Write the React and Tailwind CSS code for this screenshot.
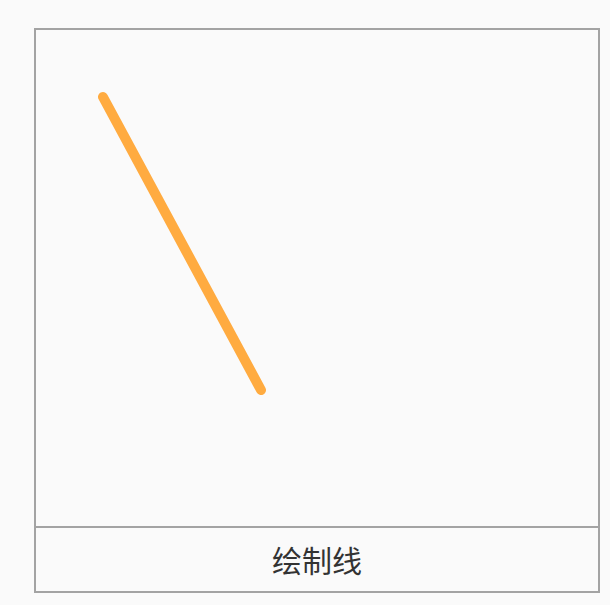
export default function App() {
  return (
    <div className="w-[610px] h-[605px] bg-[#fafafa] pt-[28px] pl-[34px]">
      <div className="w-[566px] h-[565px] border-2 border-[#a3a3a3] flex flex-col bg-[#fafafa]">
        <div className="relative h-[498px] border-b-2 border-[#a3a3a3]">
          <svg width="562" height="496" className="absolute left-0 top-0">
            <line x1="67" y1="67" x2="225" y2="360" stroke="#ffab40" strokeWidth="10" strokeLinecap="round" />
          </svg>
        </div>
        <div className="flex-1 flex items-center justify-center text-[30px] text-[#333] font-['Noto_Sans_CJK_SC',sans-serif]">
          绘制线
        </div>
      </div>
    </div>
  );
}
